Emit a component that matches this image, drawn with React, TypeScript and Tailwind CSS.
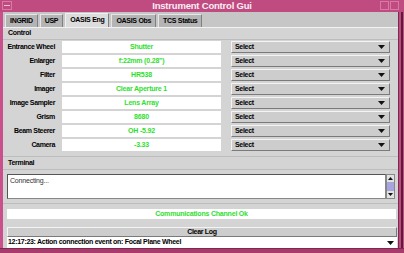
import React from 'react';

const rows = [
  { label: 'Entrance Wheel', value: 'Shutter' },
  { label: 'Enlarger', value: 'f:22mm (0.28")' },
  { label: 'Filter', value: 'HR538' },
  { label: 'Imager', value: 'Clear Aperture 1' },
  { label: 'Image Sampler', value: 'Lens Array' },
  { label: 'Grism', value: '8680' },
  { label: 'Beam Steerer', value: 'OH -5.92' },
  { label: 'Camera', value: '-3.33' },
];

const tabs = ['INGRID', 'USP', 'OASIS Eng', 'OASIS Obs', 'TCS Status'];

function Arrow() {
  return (
    <svg width="7" height="4" viewBox="0 0 7 4" className="shrink-0">
      <path d="M0 0h7L3.5 4z" fill="#111" />
    </svg>
  );
}

function SelectBox() {
  return (
    <div className="flex h-[12px] w-[159px] items-center justify-between border border-t-[#f4f4f4] border-l-[#f4f4f4] border-b-[#7a7a7a] border-r-[#7a7a7a] bg-[#cdcdcd] pl-[3px] pr-[4px]">
      <span className="text-[7px] font-bold tracking-[-0.3px] text-black">Select</span>
      <Arrow />
    </div>
  );
}

export default function App() {
  return (
    <div
      className="flex h-[253px] w-[404px] flex-col overflow-hidden bg-[#c9508a]"
      style={{ fontFamily: '"Liberation Sans", Arial, sans-serif' }}
    >
      {/* title bar */}
      <div className="relative flex h-[12px] shrink-0 items-center justify-center bg-[#c04b80]">
        <div className="absolute left-[2px] top-[1px] flex h-[9px] w-[10px] items-center justify-center border border-[#d97aa4]">
          <div className="h-px w-[6px] bg-[#f0c0d4]" />
        </div>
        <span className="text-[9.5px] font-bold tracking-[-0.2px] text-[#fbeef4]">Instrument Control Gui</span>
        <div className="absolute right-[15px] top-[1px] h-[9px] w-[9px] border border-[#d97aa4]" />
        <div className="absolute right-[5px] top-[1px] h-[9px] w-[9px] border border-[#d97aa4]" />
      </div>

      <div className="flex flex-1 pl-[3px]">
        <div className="flex w-[395px] flex-col bg-[#d4d4d4]">
          {/* tabs */}
          <div className="flex h-[16px] shrink-0 items-end gap-[2px] border-b border-[#f2f2f2] bg-[#c6c6c6] pl-[2px]">
            {tabs.map((t) => (
              <div
                key={t}
                className={
                  t === 'OASIS Eng'
                    ? 'flex h-[14px] items-center border border-b-0 border-t-[#f0f0f0] border-l-[#f0f0f0] border-r-[#808080] bg-[#dcdcdc] px-[4px] text-[7px] font-bold tracking-[-0.3px] text-black'
                    : 'flex h-[13px] items-center border border-b-0 border-t-[#e6e6e6] border-l-[#e6e6e6] border-r-[#808080] bg-[#b4b4b4] px-[4px] text-[7px] font-bold tracking-[-0.3px] text-black'
                }
              >
                {t}
              </div>
            ))}
          </div>

          {/* control panel */}
          <div className="flex h-[12px] items-center border-b border-[#bdbdbd] pl-[5px] text-[7px] font-bold tracking-[-0.3px] text-black">
            Control
          </div>
          <div className="flex flex-col gap-[2px] pt-[1px]">
            {rows.map((r) => (
              <div key={r.label} className="flex h-[12px] items-center">
                <div className="w-[52px] text-right text-[7px] font-bold tracking-[-0.35px] text-black">
                  {r.label}
                </div>
                <div className="ml-[7px] flex h-[12px] w-[159px] items-center justify-center bg-white text-[7px] font-bold tracking-[-0.2px] text-[#2ee02e]">
                  {r.value}
                </div>
                <div className="ml-[10px]">
                  <SelectBox />
                </div>
              </div>
            ))}
          </div>

          {/* terminal */}
          <div className="mt-[5px] flex h-[14px] items-center border-t border-b border-t-[#bdbdbd] border-b-[#bdbdbd] pl-[5px] text-[7px] font-bold tracking-[-0.3px] text-black">
            Terminal
          </div>
          <div className="ml-[4px] mt-[4px] flex h-[25px] w-[388px]">
            <div className="flex-1 border border-t-[#555] border-l-[#555] border-b-[#888] border-r-[#888] bg-white pl-[2px] pt-[2px] text-[7px] leading-none tracking-[-0.2px] text-[#333]">
              Connecting...
            </div>
            <div className="flex w-[9px] flex-col border border-[#888] bg-[#d0d0d0]">
              <div className="flex h-[7px] items-center justify-center bg-[#e2e2e2]">
                <svg width="5" height="3" viewBox="0 0 5 3">
                  <path d="M0 3h5L2.5 0z" fill="#111" />
                </svg>
              </div>
              <div className="h-[9px] bg-[#a8a4e0]" />
              <div className="flex-1" />
              <div className="flex h-[7px] items-center justify-center bg-[#e2e2e2]">
                <svg width="5" height="3" viewBox="0 0 5 3">
                  <path d="M0 0h5L2.5 3z" fill="#111" />
                </svg>
              </div>
            </div>
          </div>
          <div className="mt-[4px] border-t border-[#bdbdbd]" />
          <div className="ml-[4px] mt-[5px] flex h-[10px] w-[389px] items-center justify-center bg-white text-[7px] font-bold tracking-[-0.2px] text-[#2ee02e]">
            Communications Channel Ok
          </div>
          <div className="ml-[4px] mt-[8px] flex h-[10px] w-[390px] items-center justify-center border border-t-[#f4f4f4] border-l-[#f4f4f4] border-b-[#7a7a7a] border-r-[#7a7a7a] bg-[#cdcdcd] text-[7px] font-bold tracking-[-0.3px] text-black">
            Clear Log
          </div>
          <div className="ml-[4px] flex h-[11px] w-[390px] items-center justify-between bg-white pl-[1px] pr-[3px]">
            <span className="text-[7px] font-bold tracking-[-0.3px] text-black">
              12:17:23: Action connection event on: Focal Plane Wheel
            </span>
            <Arrow />
          </div>
        </div>
        <div className="flex-1 border-l border-[#7a2a50] bg-[#c04b80]">
          <div className="ml-[2px] h-full w-[2px] bg-[#5a1d3a]" />
        </div>
      </div>
      <div className="h-[5px] shrink-0 border-t border-[#7a2a50] bg-[#a83a6c]" />
    </div>
  );
}
